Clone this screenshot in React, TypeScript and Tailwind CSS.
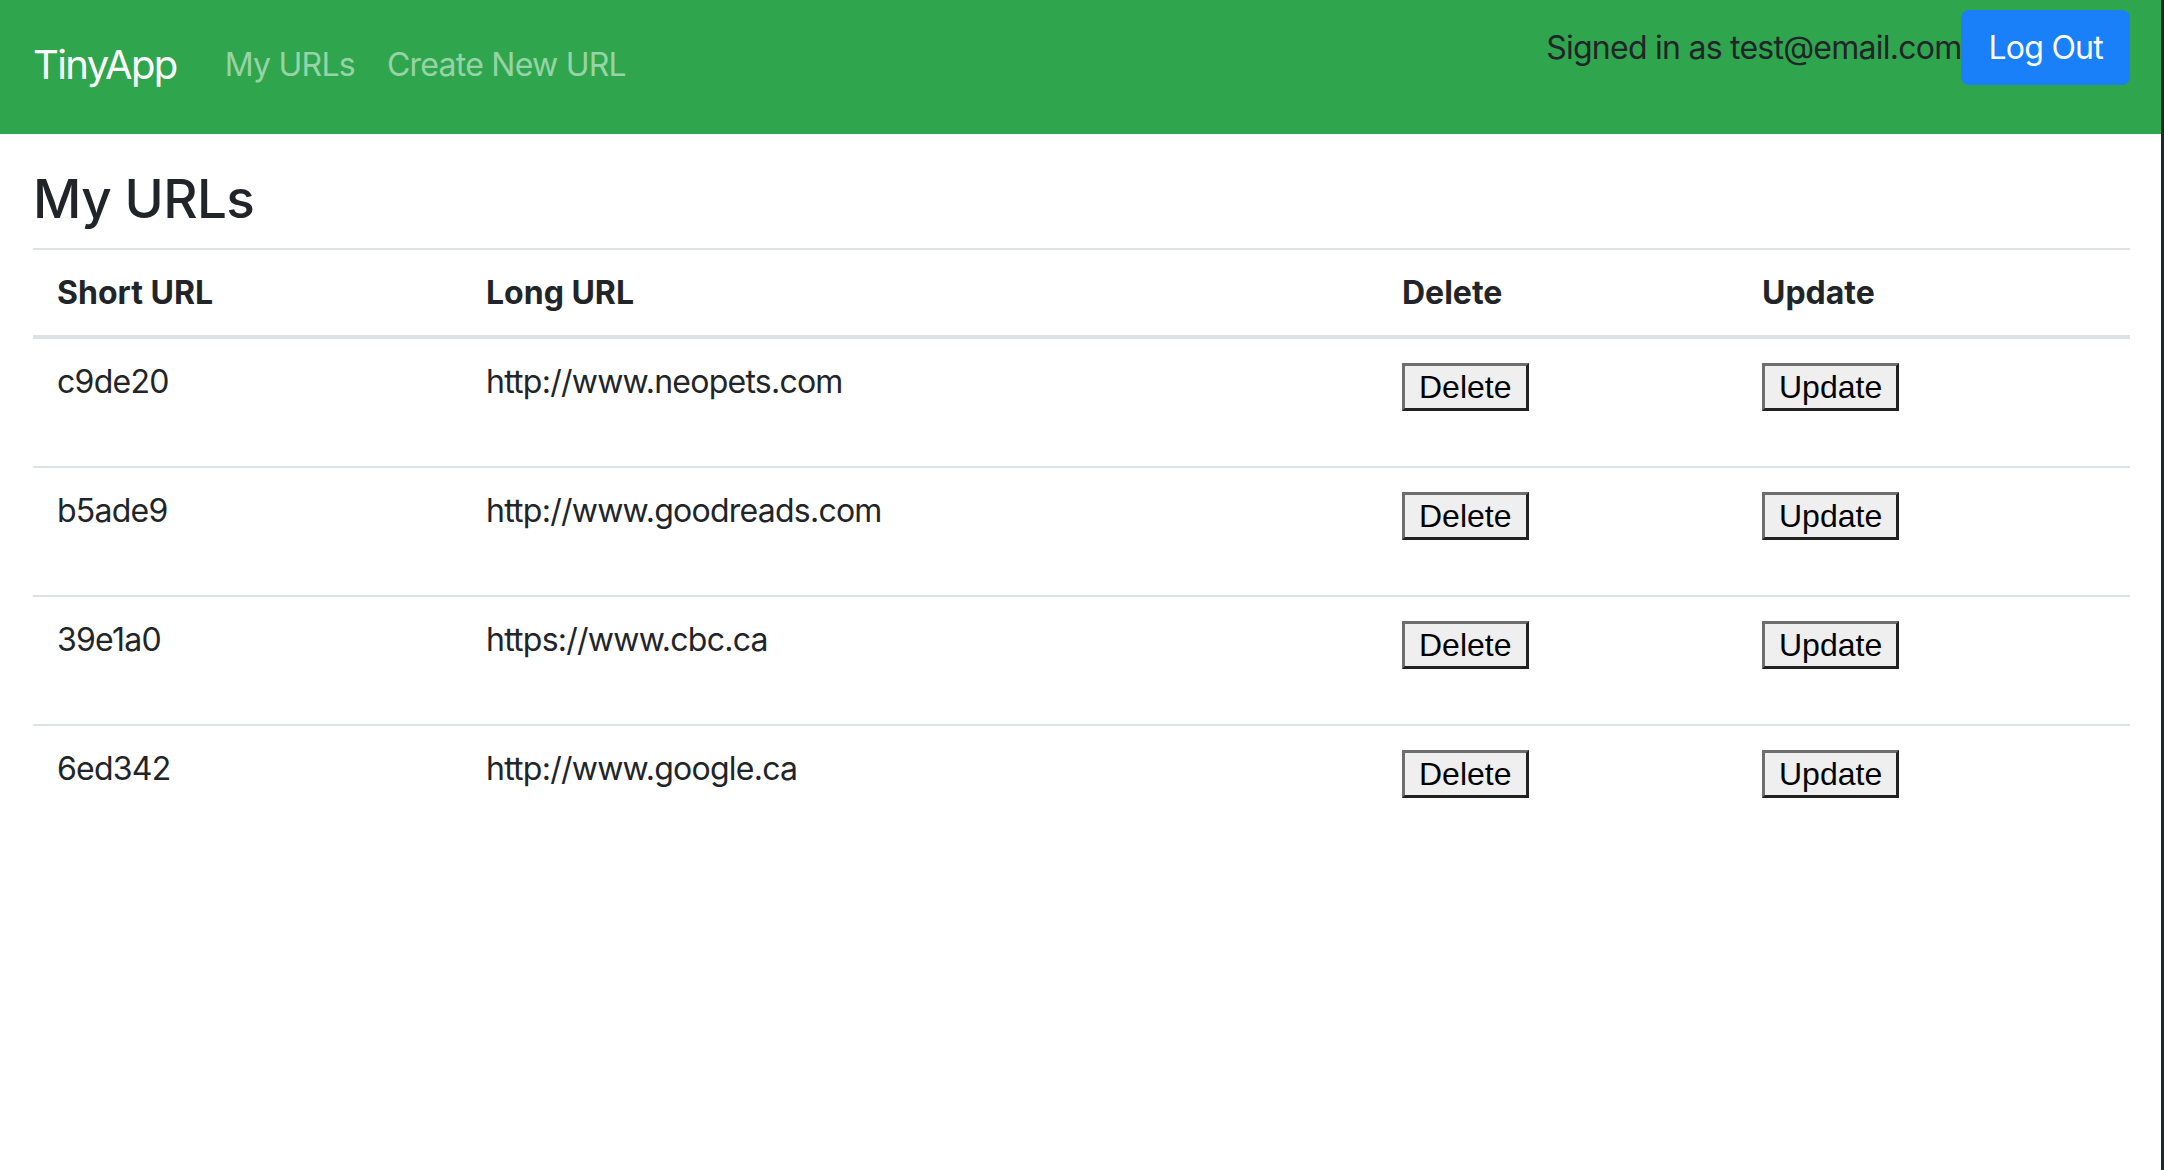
import React from "react";

interface UrlRow {
  short: string;
  long: string;
}

const urls: UrlRow[] = [
  { short: "c9de20", long: "http://www.neopets.com" },
  { short: "b5ade9", long: "http://www.goodreads.com" },
  { short: "39e1a0", long: "https://www.cbc.ca" },
  { short: "6ed342", long: "http://www.google.ca" },
];

const sans = "font-['Inter','Noto_Sans',sans-serif]";

function PlainButton({ label }: { label: string }) {
  return (
    <div className="mb-[31px]">
      <button
        type="button"
        className="h-[48px] border-[3px] border-t-[#6e6e6e] border-l-[#6e6e6e] border-r-[#222222] border-b-[#222222] bg-[#efefef] px-[14px] font-['Liberation_Sans',Arial,sans-serif] text-[32px] leading-none tracking-normal text-black"
      >
        {label}
      </button>
    </div>
  );
}

function Navbar() {
  return (
    <header className="flex h-[134px] items-start justify-between bg-[#2fa64d] pl-[33px] pr-[31px]">
      <div className="flex h-[130px] items-center">
        <span className="mr-[32px] text-[40px] leading-[60px] tracking-[-1.6px] text-white">
          TinyApp
        </span>
        <nav className="flex items-center">
          <a className="px-[16px] text-[32px] leading-[48px] text-[#97d3a6]">
            My URLs
          </a>
          <a className="px-[16px] text-[32px] leading-[48px] text-[#97d3a6]">
            Create New URL
          </a>
        </nav>
      </div>
      <div className="mt-[10px] flex items-center">
        <span className="text-[32px] leading-[48px] text-[#212529]">
          Signed in as test@email.com
        </span>
        <button
          type="button"
          className="h-[75px] rounded-[8px] bg-[#1a80f9] px-[27px] text-[32px] leading-[48px] text-white"
        >
          Log Out
        </button>
      </div>
    </header>
  );
}

export default function App() {
  return (
    <div
      className={`flex h-[1170px] w-full bg-white tracking-[-0.75px] text-[#212529] ${sans}`}
    >
      <div className="min-w-0 flex-1">
        <Navbar />

        <main className="pl-[33px] pr-[31px]">
          <h3 className="mt-[32px] mb-[15px] text-[53px] font-medium leading-[67px] tracking-[-0.6px]">
            My URLs
          </h3>

          <table className="w-full table-fixed border-collapse text-left text-[32px] leading-[37px]">
            <colgroup>
              <col className="w-[429px]" />
              <col className="w-[916px]" />
              <col className="w-[360px]" />
              <col />
            </colgroup>
            <thead>
              <tr>
                {["Short URL", "Long URL", "Delete", "Update"].map((h) => (
                  <th
                    key={h}
                    className="border-t-2 border-b-4 border-[#dee2e6] p-[24px] align-bottom font-bold tracking-normal"
                  >
                    {h}
                  </th>
                ))}
              </tr>
            </thead>
            <tbody>
              {urls.map((u) => (
                <tr key={u.short}>
                  <td className="border-t-2 border-[#dee2e6] p-[24px] align-top">
                    {u.short}
                  </td>
                  <td className="border-t-2 border-[#dee2e6] p-[24px] align-top">
                    {u.long}
                  </td>
                  <td className="border-t-2 border-[#dee2e6] p-[24px] align-top">
                    <PlainButton label="Delete" />
                  </td>
                  <td className="border-t-2 border-[#dee2e6] p-[24px] align-top">
                    <PlainButton label="Update" />
                  </td>
                </tr>
              ))}
            </tbody>
          </table>
        </main>
      </div>

      {/* edge of the neighbouring window */}
      <div className="w-[3px] bg-[#1b2631]" />
    </div>
  );
}
